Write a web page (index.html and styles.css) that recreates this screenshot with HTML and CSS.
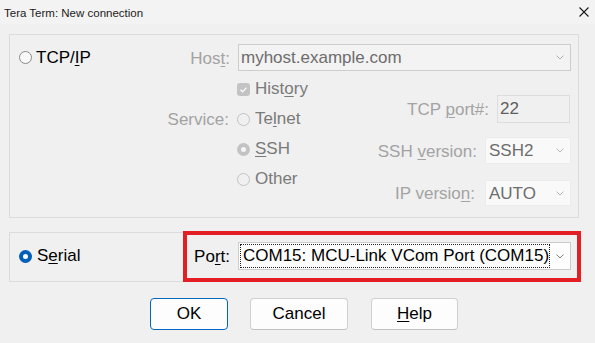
FILE: index.html
```html
<!DOCTYPE html>
<html>
<head>
<meta charset="utf-8">
<title>Tera Term: New connection</title>
<link rel="stylesheet" href="styles.css">
</head>
<body>
<div class="titlebar">
  <span class="title">Tera Term: New connection</span>
  <svg class="close" width="10" height="10" viewBox="0 0 10 10"><path d="M0.5 0.5L9.5 9.5M9.5 0.5L0.5 9.5" stroke="#1b1b1b" stroke-width="1.1" fill="none"/></svg>
</div>
<div class="content">
  <div class="group tcp">
    <div class="row-host">
      <div class="radio-item main"><span class="radio"></span><span>TCP/<u>I</u>P</span></div>
      <span class="label dis">Hos<u>t</u>:</span>
      <div class="combo host">
        <span class="combo-text">myhost.example.com</span>
        <span class="arrow"><svg width="8" height="5" viewBox="0 0 8 5"><polyline points="0.5,0.5 4,4 7.5,0.5" fill="none" stroke="#b5b5b5" stroke-width="1"/></svg></span>
      </div>
    </div>
    <div class="lower">
      <div class="service-grid">
        <span></span>
        <div class="radio-item opt"><span class="checkbox"><svg width="13" height="13" viewBox="0 0 13 13"><polyline points="3.5,6.8 5.6,8.8 9.5,4.6" fill="none" stroke="#ffffff" stroke-width="1.2"/></svg></span><span>Hist<u>o</u>ry</span></div>
        <span class="label dis right">Service:</span>
        <div class="radio-item opt"><span class="radio off"></span><span>Te<u>l</u>net</span></div>
        <span></span>
        <div class="radio-item opt"><span class="radio off-checked"></span><span><u>S</u>SH</span></div>
        <span></span>
        <div class="radio-item opt"><span class="radio off"></span><span>Other</span></div>
      </div>
      <div class="options">
        <div class="opt-row tcpport">
          <span class="label dis">TCP <u>p</u>ort#:</span>
          <div class="field">22</div>
        </div>
        <div class="opt-row sshver">
          <span class="label dis">SSH <u>v</u>ersion:</span>
          <div class="combo small">
            <span class="combo-text">SSH2</span>
            <span class="arrow"><svg width="8" height="5" viewBox="0 0 8 5"><polyline points="0.5,0.5 4,4 7.5,0.5" fill="none" stroke="#b5b5b5" stroke-width="1"/></svg></span>
          </div>
        </div>
        <div class="opt-row ipver">
          <span class="label dis wide">IP versio<u>n</u>:</span>
          <div class="combo small ip">
            <span class="combo-text">AUTO</span>
            <span class="arrow"><svg width="8" height="5" viewBox="0 0 8 5"><polyline points="0.5,0.5 4,4 7.5,0.5" fill="none" stroke="#b5b5b5" stroke-width="1"/></svg></span>
          </div>
        </div>
      </div>
    </div>
  </div>

  <div class="group serial">
    <div class="radio-item main serial-item"><span class="radio on"></span><span>S<u>e</u>rial</span></div>
    <span class="label">Po<u>r</u>t:</span>
    <div class="combo port">
      <span class="focus">COM15: MCU-Link VCom Port (COM15)</span>
      <span class="arrow"><svg width="8" height="5" viewBox="0 0 8 5"><polyline points="0.5,0.5 4,4 7.5,0.5" fill="none" stroke="#7a7a7a" stroke-width="1"/></svg></span>
    </div>
    <div class="highlight"></div>
  </div>

  <div class="buttons">
    <div class="btn ok">OK</div>
    <div class="btn cancel">Cancel</div>
    <div class="btn help"><span><u>H</u>elp</span></div>
  </div>
</div>
</body>
</html>
```

FILE: styles.css
```css
* { box-sizing: border-box; }
html, body { margin: 0; padding: 0; }
body {
  width: 595px;
  height: 343px;
  overflow: hidden;
  background: #f0f0f0;
  font-family: "Liberation Sans", Arial, sans-serif;
  font-size: 17px;
  color: #000;
}
u { text-decoration: underline; text-underline-offset: 2px; text-decoration-thickness: 1px; }

.titlebar {
  height: 24px;
  background: #f3f3f3;
  display: flex;
  align-items: center;
  justify-content: space-between;
  padding: 0 6px 0 4px;
}
.title { font-size: 11.5px; color: #1b1b1b; padding-top: 1px; }
.close { display: block; }

.content { padding: 10px 0 0 9px; }

.group {
  width: 570px;
  border: 1px solid #dcdcdc;
}
.tcp {
  height: 184px;
  padding: 9px 7px 0 0;
}

.row-host {
  display: flex;
  align-items: center;
  height: 27px;
  padding-left: 9px;
}
.radio-item { display: flex; align-items: center; gap: 4px; white-space: nowrap; }
.main { flex: 1; }
.label { margin-right: 8px; white-space: nowrap; padding-top: 2px; }
.label.wide { margin-right: 10px; }
.dis { color: #a3a3a3; }
.right { justify-self: end; margin-right: 0; }

.radio {
  width: 13px;
  height: 13px;
  border-radius: 50%;
  border: 1px solid #8a8a8a;
  background: #f9f9f9;
  flex: none;
  display: flex;
  align-items: center;
  justify-content: center;
}
.radio.off { border-color: #c3c3c3; background: transparent; }
.radio.off-checked { border: none; background: #c3c3c3; }
.radio.off-checked::after {
  content: "";
  width: 5px;
  height: 5px;
  border-radius: 50%;
  background: #f5f5f5;
}
.radio.on { border: none; background: #005fb8; }
.radio.on::after {
  content: "";
  width: 5px;
  height: 5px;
  border-radius: 50%;
  background: #ffffff;
}
.checkbox {
  width: 13px;
  height: 13px;
  border-radius: 3px;
  background: #c3c3c3;
  flex: none;
  display: block;
}
.checkbox svg { display: block; }

.combo {
  display: flex;
  height: 27px;
  border: 1px solid #cdcdcd;
  background: #f3f3f3;
}
.combo.host { width: 333px; }
.combo-text {
  flex: 1;
  display: flex;
  align-items: center;
  padding-left: 2px;
  color: #6d6d6d;
  white-space: nowrap;
}
.arrow {
  width: 20px;
  display: flex;
  align-items: center;
  justify-content: center;
  flex: none;
}
.arrow svg { display: block; }

.lower { display: flex; }
.service-grid {
  display: grid;
  grid-template-columns: 219px auto;
  column-gap: 8px;
  grid-auto-rows: 30px;
  align-items: center;
  margin-top: 3px;
}
.opt { color: #7a7a7a; gap: 5px; }

.options {
  flex: 1;
  display: flex;
  flex-direction: column;
  align-items: flex-end;
}
.opt-row { display: flex; align-items: center; }
.tcpport { margin-top: 24px; margin-right: 1px; }
.sshver { margin-top: 14px; }
.ipver { margin-top: 16px; }
.field {
  width: 73px;
  height: 28px;
  border: 1px solid #dddddd;
  color: #5e5e5e;
  padding: 4px 0 0 2px;
  line-height: 18px;
}
.combo.small {
  width: 86px;
  background: #f9f9f9;
  border-color: #ececec;
}
.combo.small .combo-text { padding-left: 3px; padding-top: 1px; }
.combo.ip { height: 26px; }

.serial {
  position: relative;
  height: 50px;
  display: flex;
  align-items: center;
  padding: 0 7px 2px 9px;
  margin-top: 14px;
}
.serial-item { gap: 5px; }
.combo.port {
  width: 333px;
  height: 28px;
  background: #fdfdfd;
  border-color: #cccccc;
  padding: 1px 0 1px 1px;
}
.focus {
  flex: 1;
  border: 1px dotted #202020;
  display: flex;
  align-items: center;
  padding-left: 2px;
  white-space: nowrap;
  color: #000;
}
.highlight {
  position: absolute;
  left: 173px;
  top: -2px;
  width: 398px;
  height: 51px;
  border: 4px solid #e31e24;
}

.buttons {
  display: flex;
  margin-top: 16px;
  padding-left: 141px;
}
.btn {
  height: 32px;
  border: 1px solid #d0d0d0;
  border-bottom-color: #c2c2c2;
  border-radius: 4px;
  background: #fdfdfd;
  display: flex;
  align-items: center;
  justify-content: center;
}
.ok { width: 78px; border-color: #0067c0; }
.cancel { width: 98px; margin-left: 22px; }
.help { width: 87px; margin-left: 23px; }
```
